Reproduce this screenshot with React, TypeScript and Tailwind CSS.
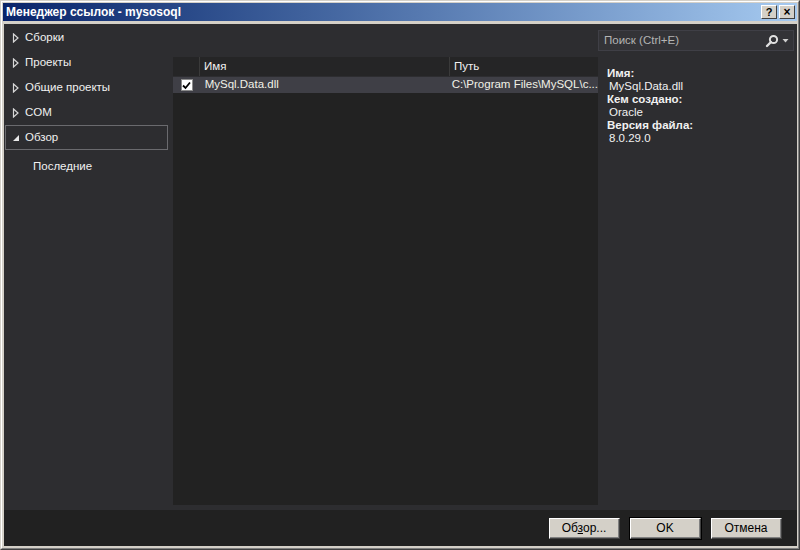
import React from 'react';

const font = { fontFamily: '"Liberation Sans", Arial, sans-serif' };

const Collapsed = () => (
  <svg width="8" height="10" viewBox="0 0 8 10" className="shrink-0">
    <path d="M1.5 1 L6 5 L1.5 9 Z" fill="none" stroke="#d8d8d8" strokeWidth="1.2" />
  </svg>
);

const Expanded = () => (
  <svg width="8" height="10" viewBox="0 0 8 10" className="shrink-0">
    <path d="M7 2 L7 8 L1 8 Z" fill="#e8e8e8" />
  </svg>
);

const SearchIcon = () => (
  <svg width="14" height="14" viewBox="0 0 14 14">
    <circle cx="8.5" cy="5.5" r="3.6" fill="none" stroke="#e0e0e0" strokeWidth="2" />
    <path d="M6 8 L2 12" stroke="#e0e0e0" strokeWidth="2.4" strokeLinecap="round" />
  </svg>
);

const ClassicButton = ({ children, primary }: { children: React.ReactNode; primary?: boolean }) => (
  <div className={primary ? 'border border-black' : 'border border-transparent'}>
    <div className="w-[71px] h-[21px] bg-[#d4d0c8] border-t border-l border-white border-r border-b border-r-[#404040] border-b-[#404040]">
      <div className="w-full h-full flex items-center justify-center text-[12px] text-black border-r border-b border-[#808080]">
        {children}
      </div>
    </div>
  </div>
);

const navItems = ['Сборки', 'Проекты', 'Общие проекты', 'COM'];

export default function App() {
  return (
    <div style={font} className="w-[800px] h-[550px] bg-[#d4d0c8] border border-t-[#d4d0c8] border-l-[#d4d0c8] border-r-[#404040] border-b-[#404040] overflow-hidden">
      <div className="w-full h-full border border-t-white border-l-white border-r-[#808080] border-b-[#808080] px-[1px] pt-[1px] pb-[2px] flex flex-col">
        {/* title bar */}
        <div className="h-[18px] shrink-0 bg-gradient-to-r from-[#0a246a] to-[#a6caf0] flex items-center pl-[3px] pr-[2px]">
          <span className="text-white font-bold text-[12px] leading-none">Менеджер ссылок - mysosoql</span>
          <div className="ml-auto flex gap-[2px]">
            <div className="w-[16px] h-[14px] bg-[#d4d0c8] border border-t-white border-l-white border-r-[#404040] border-b-[#404040] flex items-center justify-center text-[11px] font-bold text-black leading-none">?</div>
            <div className="w-[16px] h-[14px] bg-[#d4d0c8] border border-t-white border-l-white border-r-[#404040] border-b-[#404040] flex items-center justify-center text-[12px] font-bold text-black leading-none">×</div>
          </div>
        </div>

        {/* content */}
        <div className="mt-[3px] ml-[1px] flex-1 flex flex-col bg-[#2d2d30] text-[#f1f1f1] text-[11.5px]">
          <div className="flex flex-1">
            {/* nav */}
            <div className="w-[169px] shrink-0 pt-[1px] pl-[1px]">
              {navItems.map((n) => (
                <div key={n} className="h-[25px] flex items-center gap-[5px] pl-[7px]">
                  <Collapsed />
                  <span>{n}</span>
                </div>
              ))}
              <div className="h-[25px] w-[163px] flex items-center gap-[5px] pl-[6px] border border-[#6a6a6e]">
                <Expanded />
                <span>Обзор</span>
              </div>
              <div className="h-[33px] flex items-center pl-[28px]">Последние</div>
            </div>

            {/* list */}
            <div className="w-[425px] shrink-0 pt-[33px] pb-[5px] flex flex-col">
              <div className="flex-1 bg-[#222222] flex flex-col">
                <div className="h-[20px] flex bg-[#252526] border-b border-[#2d2d30]">
                  <div className="w-[27px] border-r border-[#3a3a3a]" />
                  <div className="w-[250px] pl-[4px] flex items-center border-r border-[#3a3a3a]">Имя</div>
                  <div className="flex-1 pl-[4px] flex items-center">Путь</div>
                </div>
                <div className="h-[16px] flex items-center bg-[#3f3f46] text-[#f1f1e6]">
                  <div className="w-[27px] flex justify-center pl-[1px]">
                    <div className="w-[12px] h-[12px] bg-white border border-[#8a8a8a] flex items-center justify-center">
                      <svg width="9" height="9" viewBox="0 0 9 9">
                        <path d="M1 4.5 L3.5 7 L8 1.5" fill="none" stroke="#000" strokeWidth="1.8" />
                      </svg>
                    </div>
                  </div>
                  <div className="w-[250px] pl-[5px]">MySql.Data.dll</div>
                  <div className="flex-1 pl-[5px] whitespace-nowrap">C:\Program Files\MySQL\c...</div>
                </div>
              </div>
            </div>

            {/* details */}
            <div className="flex-1 pt-[6px] pr-[3px]">
              <div className="h-[21px] bg-[#333337] border border-[#3f3f46] flex items-center pl-[5px] pr-[4px]">
                <span className="text-[#b4b4b4]">Поиск (Ctrl+E)</span>
                <div className="ml-auto flex items-center gap-[3px]">
                  <SearchIcon />
                  <svg width="7" height="4" viewBox="0 0 7 4"><path d="M0.5 0 L6.5 0 L3.5 3.5 Z" fill="#cfcfcf" /></svg>
                </div>
              </div>
              <div className="pt-[16px] pl-[9px] leading-[13px] text-[11.5px]">
                <div className="font-bold">Имя:</div>
                <div className="pl-[2px]">MySql.Data.dll</div>
                <div className="font-bold">Кем создано:</div>
                <div className="pl-[2px]">Oracle</div>
                <div className="font-bold">Версия файла:</div>
                <div className="pl-[2px]">8.0.29.0</div>
              </div>
            </div>
          </div>

          {/* footer */}
          <div className="h-[36px] shrink-0 bg-[#212121] flex items-center justify-end gap-[8px] pr-[14px]">
            <ClassicButton>
              <span>Об<span className="underline">з</span>ор...</span>
            </ClassicButton>
            <ClassicButton primary>OK</ClassicButton>
            <ClassicButton>Отмена</ClassicButton>
          </div>
        </div>
      </div>
    </div>
  );
}
